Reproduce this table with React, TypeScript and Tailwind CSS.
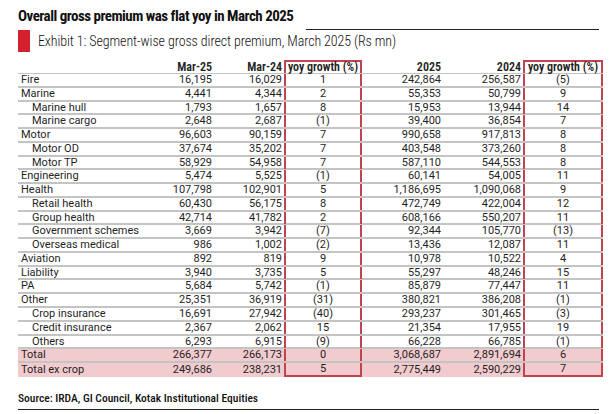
type Row = {
  label: string;
  sub?: boolean;
  total?: boolean;
  v: [string, string, string, string, string, string];
};

const rows: Row[] = [
  { label: 'Fire', v: ['16,195', '16,029', '1', '242,864', '256,587', '(5)'] },
  { label: 'Marine', v: ['4,441', '4,344', '2', '55,353', '50,799', '9'] },
  { label: 'Marine hull', sub: true, v: ['1,793', '1,657', '8', '15,953', '13,944', '14'] },
  { label: 'Marine cargo', sub: true, v: ['2,648', '2,687', '(1)', '39,400', '36,854', '7'] },
  { label: 'Motor', v: ['96,603', '90,159', '7', '990,658', '917,813', '8'] },
  { label: 'Motor OD', sub: true, v: ['37,674', '35,202', '7', '403,548', '373,260', '8'] },
  { label: 'Motor TP', sub: true, v: ['58,929', '54,958', '7', '587,110', '544,553', '8'] },
  { label: 'Engineering', v: ['5,474', '5,525', '(1)', '60,141', '54,005', '11'] },
  { label: 'Health', v: ['107,798', '102,901', '5', '1,186,695', '1,090,068', '9'] },
  { label: 'Retail health', sub: true, v: ['60,430', '56,175', '8', '472,749', '422,004', '12'] },
  { label: 'Group health', sub: true, v: ['42,714', '41,782', '2', '608,166', '550,207', '11'] },
  { label: 'Government schemes', sub: true, v: ['3,669', '3,942', '(7)', '92,344', '105,770', '(13)'] },
  { label: 'Overseas medical', sub: true, v: ['986', '1,002', '(2)', '13,436', '12,087', '11'] },
  { label: 'Aviation', v: ['892', '819', '9', '10,978', '10,522', '4'] },
  { label: 'Liability', v: ['3,940', '3,735', '5', '55,297', '48,246', '15'] },
  { label: 'PA', v: ['5,684', '5,742', '(1)', '85,879', '77,447', '11'] },
  { label: 'Other', v: ['25,351', '36,919', '(31)', '380,821', '386,208', '(1)'] },
  { label: 'Crop insurance', sub: true, v: ['16,691', '27,942', '(40)', '293,237', '301,465', '(3)'] },
  { label: 'Credit insurance', sub: true, v: ['2,367', '2,062', '15', '21,354', '17,955', '19'] },
  { label: 'Others', sub: true, v: ['6,293', '6,915', '(9)', '66,228', '66,785', '(1)'] },
  { label: 'Total', total: true, v: ['266,377', '266,173', '0', '3,068,687', '2,891,694', '6'] },
  { label: 'Total ex crop', total: true, v: ['249,686', '238,231', '5', '2,775,449', '2,590,229', '7'] },
];

const grid = 'grid grid-cols-[122px_74px_70px_78px_81px_80px_80px]';

export default function App() {
  return (
    <div className="w-[612px] h-[414px] bg-white overflow-hidden text-[#1f1f1f] pl-[18px]">
      {/* heading + rule */}
      <div className="flex items-end h-[30px] w-[581px]">
        <div className="self-start pt-[8px] whitespace-nowrap font-['Roboto_Condensed',sans-serif] font-bold text-[15px] leading-[17px] tracking-[-0.5px] text-[#111]">
          Overall gross premium was flat yoy in March 2025
        </div>
        <div className="ml-auto shrink-0 w-[293px] h-px bg-[#222]" />
      </div>

      {/* exhibit title */}
      <div className="flex items-center h-[22px]">
        <div className="w-[12px] h-[22px] bg-[#d2202e]" />
        <div className="ml-[8px] whitespace-nowrap font-['Roboto_Condensed',sans-serif] font-light text-[14px] leading-[16px] tracking-[-0.1px] text-[#111]">
          Exhibit 1: Segment-wise gross direct premium, March 2025 (Rs mn)
        </div>
      </div>

      {/* table */}
      <div className="mt-[8px] w-[585px] font-['Roboto',sans-serif] font-stretch-90% text-[11px] leading-[12px] whitespace-nowrap">
        <div className={`${grid} h-[14px] border-b border-[#c4c4c4] font-['Roboto_Condensed',sans-serif] font-semibold text-[12px] leading-[11px] text-[#222]`}>
          <div />
          <div className="text-right pr-[2px] self-end">Mar-25</div>
          <div className="text-right pr-[2px] self-end">Mar-24</div>
          <div className="flex items-end justify-center border-x-2 border-t-2 border-[#c2434d]">yoy growth (%)</div>
          <div className="text-right pr-[2px] self-end">2025</div>
          <div className="text-right pr-[2px] self-end">2024</div>
          <div className="flex items-end justify-center border-x-2 border-t-2 border-[#c2434d]">yoy growth (%)</div>
        </div>
        {rows.map((r, i) => {
          const last = i === rows.length - 1;
          return (
            <div
              key={r.label}
              className={`${grid} h-[13.78px] items-center ${last ? '' : 'border-b-2 border-[#c4c4c4]'} ${r.total ? 'bg-[#f2cbce]' : ''}`}
            >
              <div className={r.sub ? 'pl-[14px]' : 'pl-[3px]'}>{r.label}</div>
              <div className="text-right pr-[2px]">{r.v[0]}</div>
              <div className="text-right pr-[2px]">{r.v[1]}</div>
              <div className={`h-full flex items-center justify-center border-x-2 border-[#c2434d] ${last ? 'border-b-2' : ''}`}>{r.v[2]}</div>
              <div className="text-right pr-[2px]">{r.v[3]}</div>
              <div className="text-right pr-[2px]">{r.v[4]}</div>
              <div className={`h-full flex items-center justify-center border-x-2 border-[#c2434d] ${last ? 'border-b-2' : ''}`}>{r.v[5]}</div>
            </div>
          );
        })}
      </div>

      {/* source */}
      <div className="mt-[14px] font-['Roboto_Condensed',sans-serif] font-medium text-[11.5px] leading-[14px] text-[#111]">
        Source: IRDA, GI Council, Kotak Institutional Equities
      </div>
      <div className="mt-[4px] w-[581px] h-px bg-[#222]" />
    </div>
  );
}
